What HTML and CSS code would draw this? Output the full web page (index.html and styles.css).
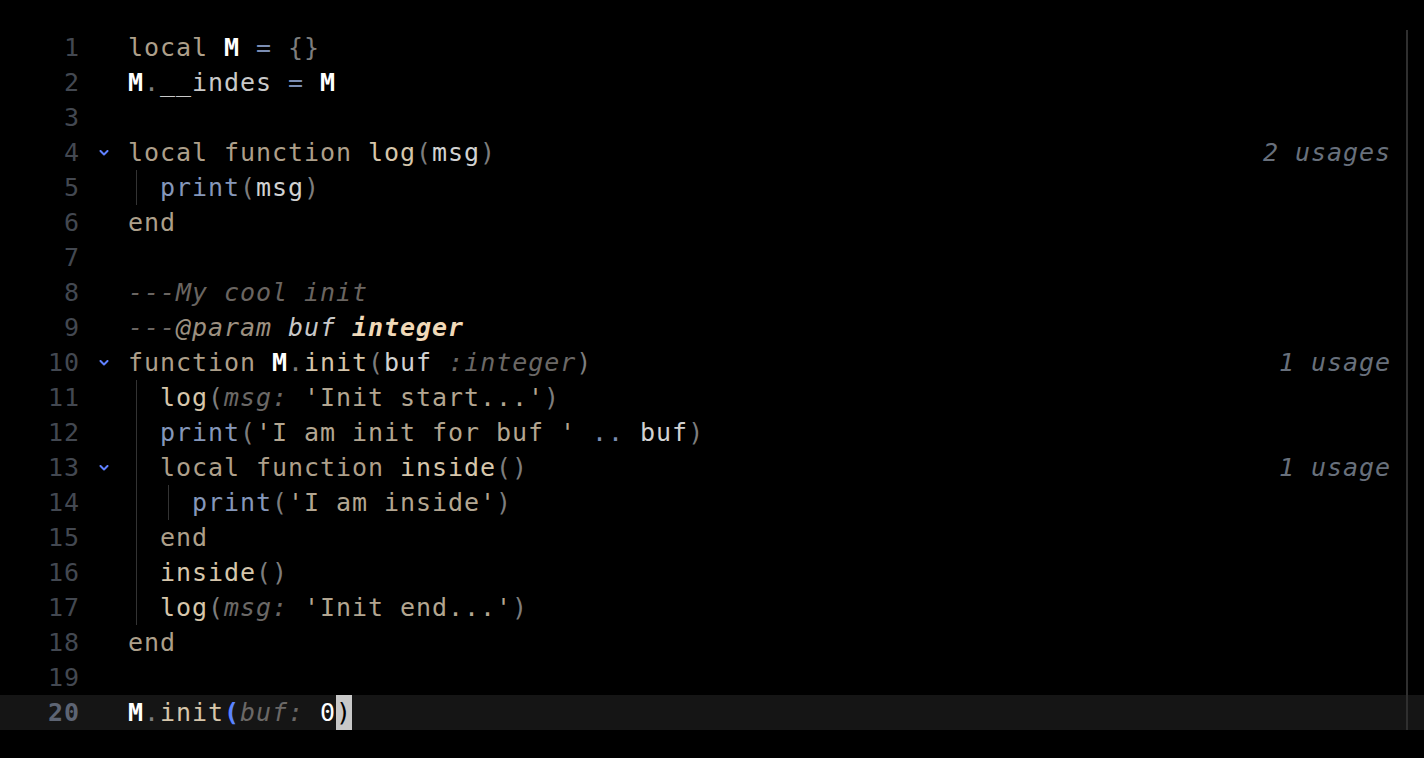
FILE: index.html
```html
<!DOCTYPE html>
<html>
<head>
<meta charset="utf-8">
<link rel="stylesheet" href="styles.css">
</head>
<body>
<div class="editor">
  <div class="row"><span class="ln">1</span><span class="fold"></span><span class="code"><span class="kw">local</span> <span class="mod">M</span> <span class="op">=</span> <span class="pn">{}</span></span></div>
  <div class="row"><span class="ln">2</span><span class="fold"></span><span class="code"><span class="mod">M</span><span class="pn">.</span><span class="fld">__indes</span> <span class="op">=</span> <span class="mod">M</span></span></div>
  <div class="row"><span class="ln">3</span><span class="fold"></span><span class="code"></span></div>
  <div class="row"><span class="ln">4</span><span class="fold"><svg class="chev" viewBox="0 0 10 6" width="10" height="6"><polyline points="1.5,1 5,4.5 8.5,1"/></svg></span><span class="code"><span class="kw">local</span> <span class="kw">function</span> <span class="fn">log</span><span class="pn">(</span><span class="var">msg</span><span class="pn">)</span></span><span class="hint">2 usages</span></div>
  <div class="row"><span class="ln">5</span><span class="fold"></span><span class="code"><span class="ind">  </span><span class="bi">print</span><span class="pn">(</span><span class="var">msg</span><span class="pn">)</span></span></div>
  <div class="row"><span class="ln">6</span><span class="fold"></span><span class="code"><span class="kw">end</span></span></div>
  <div class="row"><span class="ln">7</span><span class="fold"></span><span class="code"></span></div>
  <div class="row"><span class="ln">8</span><span class="fold"></span><span class="code"><span class="cm">---My cool init</span></span></div>
  <div class="row"><span class="ln">9</span><span class="fold"></span><span class="code"><span class="cm">---</span><span class="tag">@param</span> <span class="dvar">buf</span> <span class="dtype">integer</span></span></div>
  <div class="row"><span class="ln">10</span><span class="fold"><svg class="chev" viewBox="0 0 10 6" width="10" height="6"><polyline points="1.5,1 5,4.5 8.5,1"/></svg></span><span class="code"><span class="kw">function</span> <span class="mod">M</span><span class="pn">.</span><span class="fn">init</span><span class="pn">(</span><span class="var">buf</span> <span class="inl">:integer</span><span class="pn">)</span></span><span class="hint">1 usage</span></div>
  <div class="row"><span class="ln">11</span><span class="fold"></span><span class="code"><span class="ind">  </span><span class="fn">log</span><span class="pn">(</span><span class="inl">msg: </span><span class="str">'Init start...'</span><span class="pn">)</span></span></div>
  <div class="row"><span class="ln">12</span><span class="fold"></span><span class="code"><span class="ind">  </span><span class="bi">print</span><span class="pn">(</span><span class="str">'I am init for buf '</span> <span class="op">..</span> <span class="var">buf</span><span class="pn">)</span></span></div>
  <div class="row"><span class="ln">13</span><span class="fold"><svg class="chev" viewBox="0 0 10 6" width="10" height="6"><polyline points="1.5,1 5,4.5 8.5,1"/></svg></span><span class="code"><span class="ind">  </span><span class="kw">local</span> <span class="kw">function</span> <span class="fn">inside</span><span class="pn">()</span></span><span class="hint">1 usage</span></div>
  <div class="row"><span class="ln">14</span><span class="fold"></span><span class="code"><span class="ind">  </span><span class="ind">  </span><span class="bi">print</span><span class="pn">(</span><span class="str">'I am inside'</span><span class="pn">)</span></span></div>
  <div class="row"><span class="ln">15</span><span class="fold"></span><span class="code"><span class="ind">  </span><span class="kw">end</span></span></div>
  <div class="row"><span class="ln">16</span><span class="fold"></span><span class="code"><span class="ind">  </span><span class="fn">inside</span><span class="pn">()</span></span></div>
  <div class="row"><span class="ln">17</span><span class="fold"></span><span class="code"><span class="ind">  </span><span class="fn">log</span><span class="pn">(</span><span class="inl">msg: </span><span class="str">'Init end...'</span><span class="pn">)</span></span></div>
  <div class="row"><span class="ln">18</span><span class="fold"></span><span class="code"><span class="kw">end</span></span></div>
  <div class="row"><span class="ln">19</span><span class="fold"></span><span class="code"></span></div>
  <div class="row current"><span class="ln">20</span><span class="fold"></span><span class="code"><span class="mod">M</span><span class="pn">.</span><span class="fn">init</span><span class="brace">(</span><span class="inl">buf: </span><span class="var">0</span><span class="cursor">)</span></span></div>
</div>
</body>
</html>
```
FILE: styles.css
```css
html, body {
  margin: 0;
  padding: 0;
  background: #000;
  height: 100%;
}
.editor {
  position: relative;
  padding-top: 30px;
  font-family: "DejaVu Sans Mono", "Liberation Mono", monospace;
  font-size: 25px;
  letter-spacing: 0.95px;
  line-height: 35px;
  color: #d0d0d0;
}
.editor::after {
  content: "";
  position: absolute;
  left: 1406px;
  top: 30px;
  width: 2px;
  height: 700px;
  background: #2f2f2f;
}
.row {
  display: flex;
  height: 35px;
  white-space: pre;
}
.row.current {
  background: #151515;
}
.ln {
  width: 80px;
  text-align: right;
  color: #434851;
  flex: none;
}
.current .ln {
  color: #5d6473;
  font-weight: bold;
}
.fold {
  width: 48px;
  flex: none;
  display: flex;
  align-items: center;
  padding-left: 98px;
  padding-left: 19px;
  box-sizing: border-box;
}
.chev {
  fill: none;
  stroke: #5f80ff;
  stroke-width: 2;
  stroke-linecap: round;
  stroke-linejoin: round;
}
.code {
  flex: 1;
}
.hint {
  flex: none;
  padding-right: 33px;
  color: #68707c;
  font-style: italic;
}
.ind {
  display: inline-block;
  width: 32px;
  height: 35px;
  vertical-align: top;
  letter-spacing: 0;
  background: linear-gradient(#333333, #333333) 8px 0 / 1px 100% no-repeat;
}
.kw { color: #ad9f8a; }
.mod { color: #ffffff; font-weight: bold; }
.op { color: #7b8db3; }
.pn { color: #7d7d7d; }
.fld { color: #c9c9c9; }
.fn { color: #d6c6ab; }
.var { color: #d2d2d2; }
.bi { color: #8597ba; }
.str { color: #b3a691; }
.cm { color: #6a6561; font-style: italic; }
.tag { color: #9c9080; font-style: italic; }
.dvar { color: #c8c8c8; font-style: italic; }
.dtype { color: #f0d9b8; font-style: italic; font-weight: bold; }
.inl { color: #6b6866; font-style: italic; }
.brace { color: #5b84ff; font-weight: bold; }
.current .var { color: #ffffff; }
.cursor {
  display: inline-block;
  height: 35px;
  vertical-align: top;
  background: #c8c8c8;
  color: #000;
}
```
